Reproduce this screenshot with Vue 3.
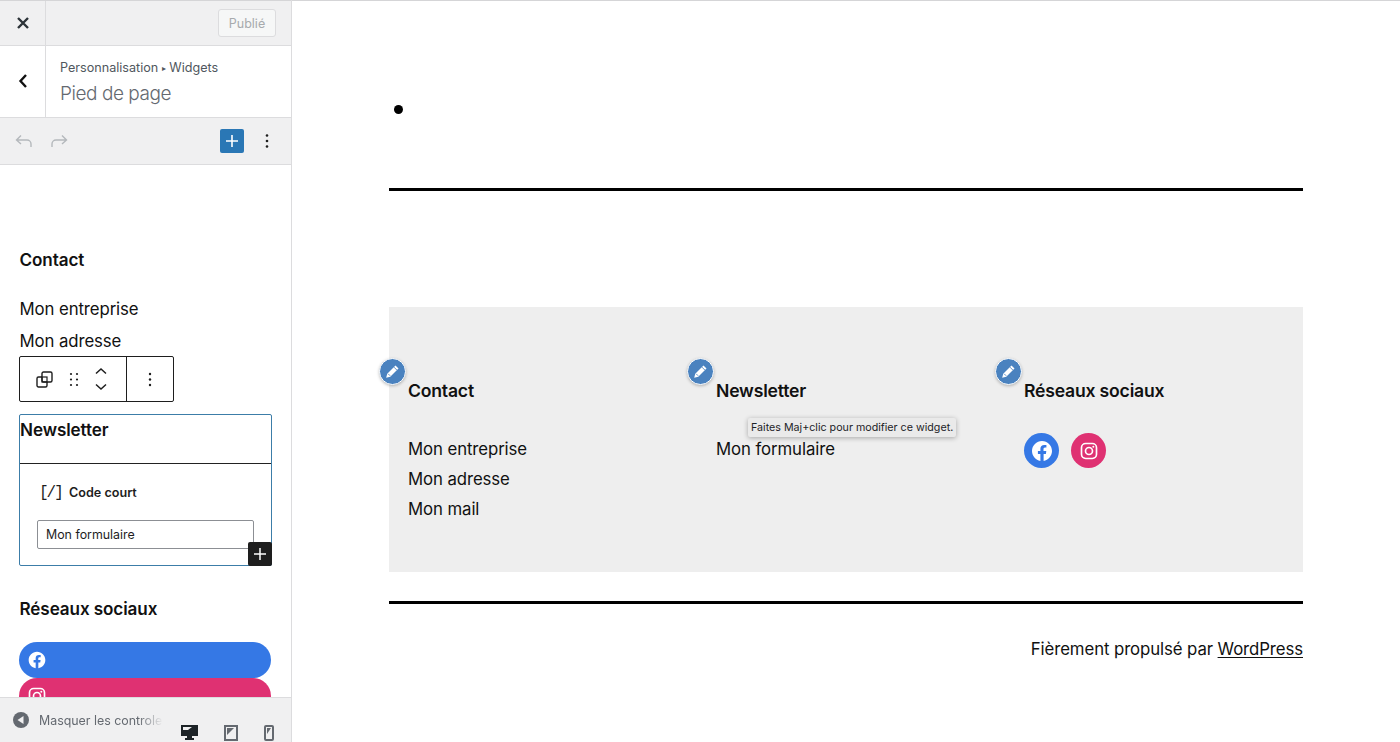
<template>
  <div class="page">
    <aside class="sidebar">
      <div class="topbar">
        <button class="close-btn">
          <svg width="14" height="14" viewBox="0 0 14 14"><path d="M2 2l10 10M12 2L2 12" stroke="#2c3338" stroke-width="2.4" fill="none"/></svg>
        </button>
        <div class="publish-wrap"><span class="publish">Publié</span></div>
      </div>

      <div class="section-head">
        <button class="back-btn">
          <svg width="10" height="16" viewBox="0 0 10 16"><path d="M8 2L2.5 8 8 14" stroke="#111" stroke-width="2.4" fill="none"/></svg>
        </button>
        <div class="section-title">
          <div class="crumbs">Personnalisation <span class="arrow">▸</span> Widgets</div>
          <div class="title">Pied de page</div>
        </div>
      </div>

      <div class="edit-bar">
        <svg class="undo" width="18" height="14" viewBox="0 0 18 14"><path d="M6 1.5L1.5 6 6 10M2 6h10a4 4 0 0 1 4 4v3" stroke="#b4b8bc" stroke-width="1.4" fill="none"/></svg>
        <svg class="redo" width="18" height="14" viewBox="0 0 18 14"><path d="M12 1.5L16.5 6 12 10M16 6H6a4 4 0 0 0-4 4v3" stroke="#b4b8bc" stroke-width="1.4" fill="none"/></svg>
        <span class="spacer"></span>
        <button class="add-btn">
          <svg width="14" height="14" viewBox="0 0 14 14"><path d="M7 1v12M1 7h12" stroke="#fff" stroke-width="1.6"/></svg>
        </button>
        <svg class="more" width="4" height="16" viewBox="0 0 4 16"><circle cx="2" cy="2.5" r="1.3" fill="#1e1e1e"/><circle cx="2" cy="8" r="1.3" fill="#1e1e1e"/><circle cx="2" cy="13.5" r="1.3" fill="#1e1e1e"/></svg>
      </div>

      <div class="editor">
        <h2 class="ed-heading first">Contact</h2>
        <p class="ed-line">Mon entreprise</p>
        <p class="ed-line">Mon adresse</p>

        <div class="block-toolbar">
          <div class="tb-group">
            <svg width="17" height="17" viewBox="0 0 17 17"><rect x="1" y="6" width="10" height="10" rx="1.5" stroke="#1e1e1e" stroke-width="1.4" fill="#fff"/><rect x="6" y="1" width="10" height="10" rx="1.5" stroke="#1e1e1e" stroke-width="1.4" fill="#fff"/><rect x="6" y="6" width="5" height="5" fill="none" stroke="#1e1e1e" stroke-width="1.2"/></svg>
            <svg width="10" height="15" viewBox="0 0 10 15"><g fill="#1e1e1e"><circle cx="2" cy="2" r="1.1"/><circle cx="8" cy="2" r="1.1"/><circle cx="2" cy="7.5" r="1.1"/><circle cx="8" cy="7.5" r="1.1"/><circle cx="2" cy="13" r="1.1"/><circle cx="8" cy="13" r="1.1"/></g></svg>
            <svg width="12" height="24" viewBox="0 0 12 24"><path d="M1 6.5L6 2l5 4.5M1 17.5L6 22l5-4.5" stroke="#1e1e1e" stroke-width="1.5" fill="none"/></svg>
          </div>
          <div class="tb-more">
            <svg width="4" height="15" viewBox="0 0 4 15"><circle cx="2" cy="2" r="1.2" fill="#1e1e1e"/><circle cx="2" cy="7.5" r="1.2" fill="#1e1e1e"/><circle cx="2" cy="13" r="1.2" fill="#1e1e1e"/></svg>
          </div>
        </div>

        <div class="selected-block">
          <h2 class="ed-heading news">Newsletter</h2>
          <div class="shortcode">
            <div class="sc-label"><span class="sc-icon">[/]</span><span>Code court</span></div>
            <div class="sc-input">Mon formulaire</div>
          </div>
          <button class="inserter">
            <svg width="14" height="14" viewBox="0 0 14 14"><path d="M7 1v12M1 7h12" stroke="#fff" stroke-width="1.5"/></svg>
          </button>
        </div>

        <h2 class="ed-heading social">Réseaux sociaux</h2>
        <div class="pill fb">
          <svg width="20" height="20" viewBox="0 0 24 24"><path :d="fbPath" fill="#fff"/></svg>
        </div>
        <div class="pill ig">
          <svg width="20" height="20" viewBox="0 0 24 24"><g fill="none" stroke="#fff" stroke-width="2"><rect x="3" y="3" width="18" height="18" rx="5"/><circle cx="12" cy="12" r="4.2"/></g><circle cx="17.2" cy="6.8" r="1.2" fill="#fff"/></svg>
        </div>
      </div>

      <div class="side-footer">
        <span class="hide-controls">
          <svg width="16" height="16" viewBox="0 0 16 16"><circle cx="8" cy="8" r="8" fill="#646970"/><path d="M10.5 4v8L4.5 8z" fill="#f0f0f1"/></svg>
          <span class="hide-label">Masquer les controles</span>
        </span>
        <div class="devices">
          <svg width="17" height="16" viewBox="0 0 17 16"><path d="M0 0h17v11H11v2h2v2H4v-2h2v-2H0z" fill="#1d2327"/><path d="M2 2h9L7 5H2z" fill="#f0f0f1"/></svg>
          <svg width="14" height="16" viewBox="0 0 14 16"><rect x="1" y="1" width="12" height="14" fill="#f0f0f1" stroke="#646970" stroke-width="2"/><path d="M3 3h7L3 10z" fill="#646970"/></svg>
          <svg width="10" height="16" viewBox="0 0 10 16"><rect x="1" y="1" width="8" height="14" rx="1" fill="#f0f0f1" stroke="#646970" stroke-width="2"/><path d="M3 3h4L3 9z" fill="#646970"/></svg>
        </div>
      </div>
    </aside>

    <main class="preview">
      <ul class="empty-list"><li></li></ul>
      <hr class="rule rule-top" />

      <section class="widgets">
        <div v-for="col in columns" :key="col.title" class="widget">
          <span class="pencil">
            <svg width="15" height="15" viewBox="0 0 14 14"><path d="M9.8 1.4l2.8 2.8-7.7 7.7-3.8 1 1-3.8z" fill="#fff"/><path d="M8.3 2.9l2.8 2.8M3 9.2l1.8 1.8" stroke="#4a82bf" stroke-width="0.8"/></svg>
          </span>
          <h2 class="w-title">{{ col.title }}</h2>
          <p v-for="line in col.lines" :key="line" class="w-line">{{ line }}</p>
          <div v-if="col.social" class="w-social">
            <a class="round fb">
              <svg width="24" height="24" viewBox="0 0 24 24"><path :d="fbPath" fill="#fff"/></svg>
            </a>
            <a class="round ig">
              <svg width="20" height="20" viewBox="0 0 24 24"><g fill="none" stroke="#fff" stroke-width="2"><rect x="3" y="3" width="18" height="18" rx="5"/><circle cx="12" cy="12" r="4.2"/></g><circle cx="17.2" cy="6.8" r="1.2" fill="#fff"/></svg>
            </a>
          </div>
          <span v-if="col.tip" class="tooltip">Faites Maj+clic pour modifier ce widget.</span>
        </div>
      </section>

      <hr class="rule rule-bottom" />
      <p class="credits">Fièrement propulsé par <a>WordPress</a></p>
    </main>
  </div>
</template>

<script setup>
const fbPath = 'M12 2C6.5 2 2 6.5 2 12c0 5 3.7 9.1 8.4 9.9v-7H7.9V12h2.5V9.8c0-2.5 1.5-3.9 3.8-3.9 1.1 0 2.2.2 2.2.2v2.5h-1.3c-1.2 0-1.6.8-1.6 1.6V12h2.8l-.4 2.9h-2.3v7C18.3 21.1 22 17 22 12c0-5.5-4.5-10-10-10z'

const columns = [
  { title: 'Contact', lines: ['Mon entreprise', 'Mon adresse', 'Mon mail'] },
  { title: 'Newsletter', lines: ['Mon formulaire'], tip: true },
  { title: 'Réseaux sociaux', lines: [], social: true },
]
</script>

<style>
html, body { margin: 0; background: #fff; overflow: hidden; }
</style>

<style scoped>
.page {
  display: flex;
  height: 742px;
  font-family: Inter, "Noto Sans", sans-serif;
  color: #111;
  overflow: hidden;
}
button { border: 0; padding: 0; background: none; display: flex; align-items: center; justify-content: center; }

/* Sidebar */
.sidebar {
  width: 291px;
  flex: none;
  height: 742px;
  display: flex;
  flex-direction: column;
  border-right: 1px solid #dcdcde;
  box-sizing: content-box;
  background: #fff;
}
.topbar {
  height: 46px;
  flex: none;
  display: flex;
  background: #f0f0f1;
  border-top: 1px solid #d5d5d7;
  border-bottom: 1px solid #dcdcde;
  box-sizing: border-box;
}
.close-btn { width: 46px; border-right: 1px solid #dcdcde; box-sizing: border-box; }
.publish-wrap { flex: 1; display: flex; justify-content: flex-end; align-items: center; padding-right: 15px; }
.publish {
  width: 58px;
  height: 28px;
  display: flex;
  align-items: center;
  justify-content: center;
  box-sizing: border-box;
  border: 1px solid #dcdcde;
  border-radius: 3px;
  background: #f6f7f7;
  color: #a7aaad;
  font-size: 12.5px;
}
.section-head {
  height: 72px;
  flex: none;
  display: flex;
  border-bottom: 1px solid #dcdcde;
  box-sizing: border-box;
}
.back-btn { width: 46px; border-right: 1px solid #dcdcde; box-sizing: border-box; padding-bottom: 2px; }
.section-title { padding: 13px 0 0 14px; }
.crumbs { font-size: 12.6px; line-height: 18px; color: #50575e; }
.arrow { font-size: 8px; vertical-align: 1px; }
.title { margin-top: 1px; font-size: 19px; line-height: 32px; color: #646970; letter-spacing: -0.45px; font-weight: 300; }
.edit-bar {
  height: 47px;
  flex: none;
  display: flex;
  align-items: center;
  padding: 0 22px 0 15px;
  background: #f0f0f1;
  border-bottom: 1px solid #dcdcde;
  box-sizing: border-box;
}
.redo { margin-left: 17px; }
.spacer { flex: 1; }
.add-btn { width: 24px; height: 24px; background: #2a77b5; border-radius: 2px; margin-right: 21px; }

.editor {
  flex: 1;
  min-height: 0;
  overflow: hidden;
  padding: 0 19px;
  box-sizing: border-box;
}
.ed-heading { margin: 0; font-size: 17.1px; font-weight: 600; line-height: 24px; color: #111; letter-spacing: -0.1px; }
.ed-heading.first { margin-top: 83px; margin-bottom: 26px; padding-left: 0.5px; }
.ed-line { margin: 0 0 8px; padding-left: 0.5px; font-size: 16.8px; line-height: 23.5px; letter-spacing: -0.1px; }
.block-toolbar {
  display: flex;
  width: 155px;
  height: 46px;
  margin-top: -5px;
  border: 1px solid #1e1e1e;
  border-radius: 2px;
  box-sizing: border-box;
  background: #fff;
}
.tb-group {
  width: 107px;
  display: flex;
  align-items: center;
  gap: 16px;
  padding-left: 16px;
  box-sizing: border-box;
  border-right: 1px solid #1e1e1e;
}
.tb-more { flex: 1; display: flex; align-items: center; justify-content: center; }
.selected-block {
  position: relative;
  width: 253px;
  height: 152px;
  margin-top: 12px;
  box-sizing: border-box;
  border: 1.5px solid #3c7da8;
  border-radius: 2px;
}
.ed-heading.news { height: 48px; line-height: 30px; border-bottom: 1px solid #222; }
.shortcode { padding: 19px 17px 0; }
.sc-label { display: flex; align-items: center; gap: 10px; font-size: 12.6px; font-weight: 600; line-height: 20px; color: #1e1e1e; }
.sc-icon { font-size: 16px; font-weight: 400; letter-spacing: -2px; margin-left: 2px; font-family: "Liberation Mono", monospace; width: 20px; }
.sc-input {
  height: 29px;
  margin-top: 17px;
  padding-left: 8px;
  border: 1px solid #8c8f94;
  border-radius: 2px;
  font-size: 12.4px;
  line-height: 27px;
  color: #1e1e1e;
  box-sizing: border-box;
}
.inserter {
  position: absolute;
  right: -1px;
  bottom: -1px;
  width: 24px;
  height: 24px;
  background: #1e1e1e;
  border-radius: 2px;
}
.ed-heading.social { margin-top: 31px; margin-bottom: 21px; padding-left: 0.5px; }
.pill {
  width: 252px;
  height: 36px;
  border-radius: 18px;
  display: flex;
  align-items: center;
  padding-left: 8px;
  box-sizing: border-box;
}
.pill.fb { background: #3578e5; }
.pill.ig { background: #df3172; }

.side-footer {
  position: relative;
  height: 45px;
  flex: none;
  background: #f0f0f1;
  border-top: 1px solid #dcdcde;
  box-sizing: border-box;
  display: flex;
}
.hide-controls {
  display: flex;
  align-items: center;
  gap: 10px;
  height: 44px;
  padding-left: 13px;
  font-size: 12.4px;
  color: #646970;
  white-space: nowrap;
  flex: none;
}
.hide-label {
  -webkit-mask-image: linear-gradient(to right, #000 80%, transparent);
  mask-image: linear-gradient(to right, #000 80%, transparent);
  width: 124px;
  overflow: hidden;
}
.devices {
  position: absolute;
  left: 181px;
  bottom: 1px;
  display: flex;
  align-items: center;
  gap: 26px;
}

/* Preview */
.preview {
  flex: 1;
  min-width: 0;
  padding: 0 97px;
  box-sizing: border-box;
  border-top: 1px solid #d5d5d7;
  background: #fff;
}
.empty-list { margin: 0; padding: 97px 0 0 0; list-style: none; height: 187px; box-sizing: border-box; }
.empty-list li {
  width: 9px;
  height: 9px;
  border-radius: 50%;
  background: #000;
  margin: 7px 0 0 5px;
}
.rule { margin: 0; height: 3px; border: 0; background: #000; }
.widgets {
  margin-top: 116px;
  height: 265px;
  background: #eee;
  display: grid;
  grid-template-columns: repeat(3, 278px);
  column-gap: 30px;
  padding: 0 0 0 19px;
  box-sizing: border-box;
}
.widget { position: relative; padding-top: 72px; }
.pencil {
  position: absolute;
  left: -29px;
  top: 51px;
  width: 25px;
  height: 25px;
  border-radius: 50%;
  background: #4a82bf;
  border: 1.5px solid #fff;
  box-shadow: 0 1px 3px rgba(0,0,0,0.25);
  display: flex;
  align-items: center;
  justify-content: center;
  box-sizing: content-box;
}
.w-title { margin: 0 0 31px; font-size: 17.6px; line-height: 24px; font-weight: 600; letter-spacing: -0.2px; color: #111; }
.w-line { margin: 0; font-size: 16.8px; line-height: 30px; color: #111; letter-spacing: -0.1px; }
.w-social { display: flex; gap: 12px; margin-top: -1px; }
.round {
  width: 35px;
  height: 35px;
  border-radius: 50%;
  display: flex;
  align-items: center;
  justify-content: center;
}
.round.fb { background: #3578e5; }
.round.ig { background: #df3172; }
.tooltip {
  position: absolute;
  left: 32px;
  top: 111px;
  height: 19px;
  padding: 0 3px;
  background: #eaeaea;
  box-shadow: 0 1px 5px rgba(0,0,0,0.3);
  border-radius: 2px;
  font-size: 10.7px;
  line-height: 19px;
  color: #1d2327;
  white-space: nowrap;
}
.rule-bottom { margin-top: 29px; }
.credits { margin: 33px 0 0; text-align: right; font-size: 16.8px; line-height: 24px; color: #111; letter-spacing: -0.1px; }
.credits a { text-decoration: underline; text-underline-offset: 2px; }
</style>
